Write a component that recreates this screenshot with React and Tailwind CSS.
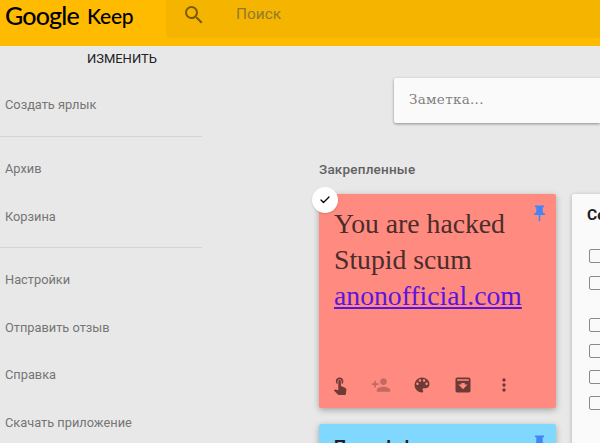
import React from 'react';
import { Check } from 'lucide-react';

const PinIcon = ({ className }) => (
  <svg viewBox="0 0 24 24" className={className} fill="currentColor">
    <path d="M16 9V4h1c.55 0 1-.45 1-1s-.45-1-1-1H7c-.55 0-1 .45-1 1s.45 1 1 1h1v5c0 1.66-1.34 3-3 3v2h5.97v7l1 1 1-1v-7H19v-2c-1.66 0-3-1.34-3-3z" />
  </svg>
);

const Icon = ({ d, className = '' }) => (
  <svg viewBox="0 0 24 24" className={`w-[20px] h-[20px] ${className}`} fill="currentColor">
    <path d={d} />
  </svg>
);

const SideItem = ({ children }) => (
  <div className="h-[47.5px] flex items-center pl-[5px] text-[12.8px] text-[#757575]">{children}</div>
);

const Checkbox = ({ className = '' }) => (
  <div className={`w-[14px] h-[14px] ml-[2px] rounded-[2px] border border-[#8a8a8a] ${className}`} />
);

export default function App() {
  return (
    <div className="w-[600px] h-[443px] overflow-hidden bg-[#e8e8e8] font-['Roboto',sans-serif]">
      {/* Header */}
      <div className="h-[46px] bg-[#ffbb00] flex items-start">
        <div className="w-[166px] h-[38px] flex items-center pl-[5px] pb-[8px] text-black leading-none">
          <span className="font-['Lato',sans-serif] font-medium text-[25px] tracking-[-0.8px]">Google</span>
          <span className="font-['Lato',sans-serif] font-medium text-[21px] ml-[8px] tracking-[-0.2px]">Keep</span>
        </div>
        <div className="flex-1 h-[38px] bg-[#f5b400] rounded-bl-[3px] flex items-center pb-[8px]">
          <svg viewBox="0 0 24 24" className="w-[24px] h-[24px] ml-[16px] text-[#7a5a00]" fill="currentColor">
            <path d="M15.5 14h-.79l-.28-.27A6.47 6.47 0 0 0 16 9.5 6.5 6.5 0 1 0 9.5 16c1.61 0 3.09-.59 4.23-1.57l.27.28v.79l5 4.99L20.49 19l-4.99-5zm-6 0C7.01 14 5 11.99 5 9.5S7.01 5 9.5 5 14 7.01 14 9.5 11.99 14 9.5 14z" />
          </svg>
          <span className="ml-[30px] text-[15.4px] text-[#8f7a30]">Поиск</span>
        </div>
      </div>

      <div className="flex">
        {/* Sidebar */}
        <div className="w-[202px] shrink-0">
          <div className="h-[26px] flex items-center justify-end pr-[45px] text-[13px] text-[#212121]">ИЗМЕНИТЬ</div>
          <div className="h-[64px] flex items-center pl-[5px] pt-[1px] text-[12.8px] text-[#757575]">Создать ярлык</div>
          <div className="border-t border-[#d4d4d4] pt-[8px]">
            <SideItem>Архив</SideItem>
            <SideItem>Корзина</SideItem>
          </div>
          <div className="border-t border-[#d4d4d4] mt-[7px] pt-[8px]">
            <SideItem>Настройки</SideItem>
            <SideItem>Отправить отзыв</SideItem>
            <SideItem>Справка</SideItem>
            <SideItem>Скачать приложение</SideItem>
          </div>
        </div>

        {/* Main */}
        <div className="flex-1 min-w-0">
          <div className="ml-[192px] mt-[32px] h-[45px] bg-[#fafafa] rounded-l-[2px] shadow-[0_1px_3px_rgba(0,0,0,0.4)] flex items-center pl-[15px] pb-[2px] font-['DejaVu_Serif',serif] text-[13.5px] tracking-[0.3px] text-[#808080]">
            Заметка...
          </div>
          <div className="ml-[117px] mt-[36px] text-[13.5px] tracking-[0.2px] font-medium text-[#616161]">Закрепленные</div>

          <div className="ml-[117px] mt-[15px] flex gap-[16px] items-start">
            <div className="w-[237px] shrink-0">
              {/* Red note */}
              <div className="relative h-[214px] bg-[#ff8a80] rounded-[2px] shadow-[0_2px_6px_rgba(0,0,0,0.3)] pl-[15px] pt-[12px]">
                <div className="absolute -left-[7px] -top-[7px] w-[26px] h-[26px] rounded-full bg-white flex items-center justify-center shadow-[0_1px_2px_rgba(0,0,0,0.15)]">
                  <Check className="w-[12px] h-[12px] text-black" strokeWidth={2.5} />
                </div>
                <PinIcon className="absolute right-[7px] top-[10px] w-[19px] h-[19px] text-[#4285f4]" />
                <div className="font-['Liberation_Serif',serif] text-[27.7px] leading-[36px] text-[#4a2c2a]">
                  <div>You are hacked</div>
                  <div>Stupid scum</div>
                  <a className="underline text-[#5b14e0]">anonofficial.com</a>
                </div>
                <div className="absolute left-[11px] bottom-[13px] flex items-center gap-[21px] text-[#6d3a36]">
                  <Icon d="M9 11.24V7.5a2.5 2.5 0 0 1 5 0v3.74c1.21-.81 2-2.18 2-3.74C16 5.01 13.99 3 11.5 3S7 5.01 7 7.5c0 1.56.79 2.93 2 3.74zm9.84 4.63l-4.54-2.26c-.17-.07-.35-.11-.54-.11H13v-6c0-.83-.67-1.5-1.5-1.5S10 6.67 10 7.5v10.74l-3.43-.72c-.08-.01-.15-.03-.24-.03-.31 0-.59.13-.79.33l-.79.8 4.94 4.94c.27.27.65.44 1.06.44h6.79c.75 0 1.33-.55 1.44-1.28l.75-5.27c.01-.07.02-.14.02-.2 0-.62-.38-1.16-.91-1.38z" />
                  <Icon className="opacity-40" d="M15 12c2.21 0 4-1.79 4-4s-1.79-4-4-4-4 1.79-4 4 1.79 4 4 4zm-9-2V7H4v3H1v2h3v3h2v-3h3v-2H6zm9 4c-2.67 0-8 1.34-8 4v2h16v-2c0-2.66-5.33-4-8-4z" />
                  <Icon d="M12 3a9 9 0 0 0 0 18c.83 0 1.5-.67 1.5-1.5 0-.39-.15-.74-.39-1.01-.23-.26-.38-.61-.38-.99 0-.83.67-1.5 1.5-1.5H16c2.76 0 5-2.24 5-5 0-4.42-4.03-8-9-8zm-5.5 9c-.83 0-1.5-.67-1.5-1.5S5.67 9 6.5 9 8 9.67 8 10.5 7.33 12 6.5 12zm3-4C8.67 8 8 7.33 8 6.5S8.67 5 9.5 5s1.5.67 1.5 1.5S10.33 8 9.5 8zm5 0c-.83 0-1.5-.67-1.5-1.5S13.67 5 14.5 5s1.5.67 1.5 1.5S15.33 8 14.5 8zm3 4c-.83 0-1.5-.67-1.5-1.5S16.67 9 17.5 9s1.5.67 1.5 1.5-.67 1.5-1.5 1.5z" />
                  <Icon d="M19 3H5c-1.1 0-2 .9-2 2v14c0 1.1.9 2 2 2h14c1.1 0 2-.9 2-2V5c0-1.1-.9-2-2-2zM5 5h14v2H5V5zm7 12l-5.5-5.5H10v-2h4v2h3.5L12 17z" />
                  <Icon d="M12 8c1.1 0 2-.9 2-2s-.9-2-2-2-2 .9-2 2 .9 2 2 2zm0 2c-1.1 0-2 .9-2 2s.9 2 2 2 2-.9 2-2-.9-2-2-2zm0 6c-1.1 0-2 .9-2 2s.9 2 2 2 2-.9 2-2-.9-2-2-2z" />
                </div>
              </div>
              {/* Blue note */}
              <div className="relative mt-[16px] h-[60px] bg-[#80d8ff] rounded-[2px] shadow-[0_2px_6px_rgba(0,0,0,0.3)] pl-[15px] pt-[10px]">
                <PinIcon className="absolute right-[7px] top-[10px] w-[19px] h-[19px] text-[#4285f4]" />
                <div className="text-[17px] font-bold text-[#202020]">Пакет kek</div>
              </div>
            </div>

            {/* White note */}
            <div className="w-[100px] shrink-0 h-[260px] bg-[#fafafa] rounded-[2px] shadow-[0_1px_4px_rgba(0,0,0,0.25)] pl-[15px] pt-[11px]">
              <div className="text-[15.5px] font-bold text-[#202020] leading-[20px]">Co</div>
              <Checkbox className="mt-[24px]" />
              <Checkbox className="mt-[13px]" />
              <Checkbox className="mt-[28px]" />
              <Checkbox className="mt-[12px]" />
              <Checkbox className="mt-[12px]" />
              <Checkbox className="mt-[12px]" />
            </div>
          </div>
        </div>
      </div>
    </div>
  );
}
